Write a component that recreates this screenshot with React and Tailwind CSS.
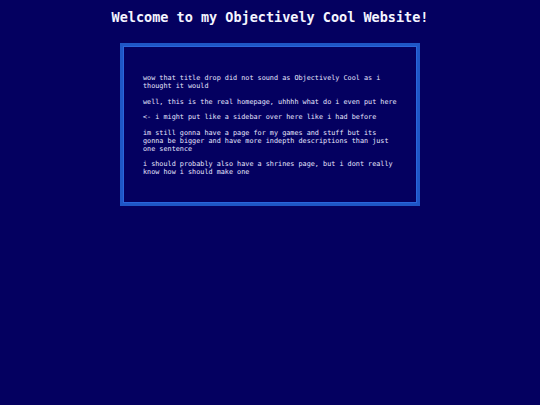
import React from "react";

const paragraphs = [
  "wow that title drop did not sound as Objectively Cool as i thought it would",
  "well, this is the real homepage, uhhhh what do i even put here",
  "<- i might put like a sidebar over here like i had before",
  "im still gonna have a page for my games and stuff but its gonna be bigger and have more indepth descriptions than just one sentence",
  "i should probably also have a shrines page, but i dont really know how i should make one",
];

const App = () => {
  return (
    <div
      className="min-h-[405px] w-full bg-[#040060] text-white"
      style={{ fontFamily: '"DejaVu Sans Mono", "Liberation Mono", monospace' }}
    >
      <h1 className="pt-[9px] text-center text-[13.5px] font-bold leading-[16px] text-[#f4f4ff]">
        Welcome to my Objectively Cool Website!
      </h1>

      {/* main box */}
      <div className="mx-auto mt-[18px] h-[163px] w-[300px] border-[3px] border-solid border-[#1f56c6] px-[20px] pt-[28px] shadow-[inset_0_0_0_1px_#2a66dc]">
        <div className="flex flex-col gap-[7.6px] text-[6.8px] leading-[8px] text-[#e6e6ff]">
          {paragraphs.map((p, i) => (
            <p key={i}>{p}</p>
          ))}
        </div>
      </div>
    </div>
  );
};

export default App;
